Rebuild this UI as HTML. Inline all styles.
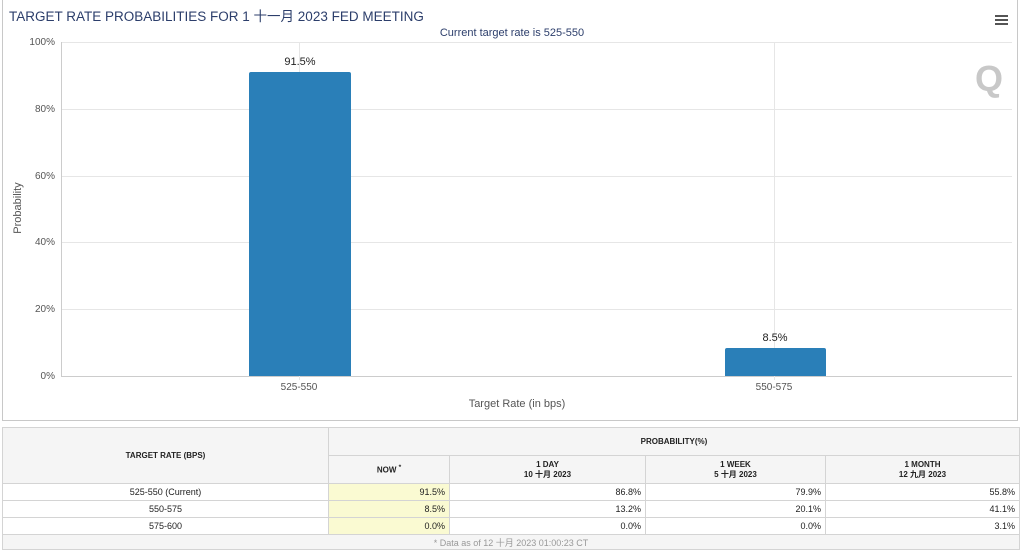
<!DOCTYPE html>
<html><head><meta charset="utf-8"><style>
body{margin:0;width:1024px;height:553px;background:#fff;position:relative;overflow:hidden;font-family:"Liberation Sans","Noto Sans CJK SC",sans-serif}
.a{position:absolute}
.chart{left:2px;top:-1px;width:1016px;height:422px;border:1px solid #c8c8c8;box-sizing:border-box}
.g{position:absolute;left:61px;width:951px;height:1px;background:#e6e6e6}
.yl{position:absolute;left:20px;width:35px;text-align:right;font-size:10px;color:#555}
.bar{position:absolute;background:#2a7fb8;border-radius:2px 2px 0 0}
.dl{position:absolute;font-size:11px;color:#222;width:100px;text-align:center}
table{position:absolute;left:2px;top:427px;width:1018px;border-collapse:collapse;font-size:9px;color:#222}
td,th{border:1px solid #d4d4d4;padding:0 4px}
th{background:#f5f5f5;font-weight:bold;font-size:8px}
td.r{text-align:right}
td.c{text-align:center}
td.y{background:#fafad2;text-align:right}
</style></head><body>
<div class="a chart"></div>
<div class="a" style="left:9px;top:5px;font-size:13.5px;color:#2c3e6b">TARGET RATE PROBABILITIES FOR 1 十一月 2023 FED MEETING</div>
<div class="a" style="left:0;width:1024px;top:27px;text-align:center;font-size:11px;color:#2c3e6b">Current target rate is 525-550</div>
<div class="a" style="left:995px;top:15px;width:13px;height:2px;background:#555;box-shadow:0 4px 0 #555,0 8px 0 #555"></div>
<div class="a" style="left:975px;top:58px;font-size:36px;font-weight:bold;color:#c8c8c8">Q</div>
<div class="g" style="top:42px"></div><div class="g" style="top:109px"></div><div class="g" style="top:176px"></div><div class="g" style="top:242px"></div><div class="g" style="top:309px"></div>
<div class="a" style="left:61px;top:376px;width:951px;height:1px;background:#ccc"></div>
<div class="a" style="left:61px;top:42px;width:1px;height:334px;background:#ccc"></div>
<div class="a" style="left:299px;top:42px;width:1px;height:338px;background:#e6e6e6"></div>
<div class="a" style="left:774px;top:42px;width:1px;height:338px;background:#e6e6e6"></div>
<div class="yl" style="top:37px">100%</div><div class="yl" style="top:104px">80%</div><div class="yl" style="top:171px">60%</div><div class="yl" style="top:237px">40%</div><div class="yl" style="top:304px">20%</div><div class="yl" style="top:371px">0%</div>
<div class="a" style="left:-12px;top:202px;transform:rotate(-90deg);font-size:11px;color:#555;width:60px;text-align:center">Probability</div>
<div class="bar" style="left:249px;top:72px;width:102px;height:304px"></div>
<div class="bar" style="left:725px;top:348px;width:101px;height:28px"></div>
<div class="dl" style="left:250px;top:56px">91.5%</div>
<div class="dl" style="left:725px;top:332px">8.5%</div>
<div class="a" style="left:249px;width:100px;text-align:center;top:382px;font-size:10px;color:#555">525-550</div>
<div class="a" style="left:724px;width:100px;text-align:center;top:382px;font-size:10px;color:#555">550-575</div>
<div class="a" style="left:0;width:1034px;text-align:center;top:398px;font-size:11px;color:#555">Target Rate (in bps)</div>
<table>
<tr style="height:28px"><th rowspan="2" style="width:317px">TARGET RATE (BPS)</th><th colspan="4">PROBABILITY(%)</th></tr>
<tr style="height:28px"><th style="width:112px">NOW <sup>*</sup></th><th style="width:187px">1 DAY<br>10 十月 2023</th><th style="width:171px">1 WEEK<br>5 十月 2023</th><th>1 MONTH<br>12 九月 2023</th></tr>
<tr style="height:17px"><td class="c">525-550 (Current)</td><td class="y">91.5%</td><td class="r">86.8%</td><td class="r">79.9%</td><td class="r">55.8%</td></tr>
<tr style="height:17px"><td class="c">550-575</td><td class="y">8.5%</td><td class="r">13.2%</td><td class="r">20.1%</td><td class="r">41.1%</td></tr>
<tr style="height:17px"><td class="c">575-600</td><td class="y">0.0%</td><td class="r">0.0%</td><td class="r">0.0%</td><td class="r">3.1%</td></tr>
<tr style="height:15px"><td colspan="5" class="c" style="background:#f5f5f5;color:#999;font-size:9px">* Data as of 12 十月 2023 01:00:23 CT</td></tr>
</table>
</body></html>
